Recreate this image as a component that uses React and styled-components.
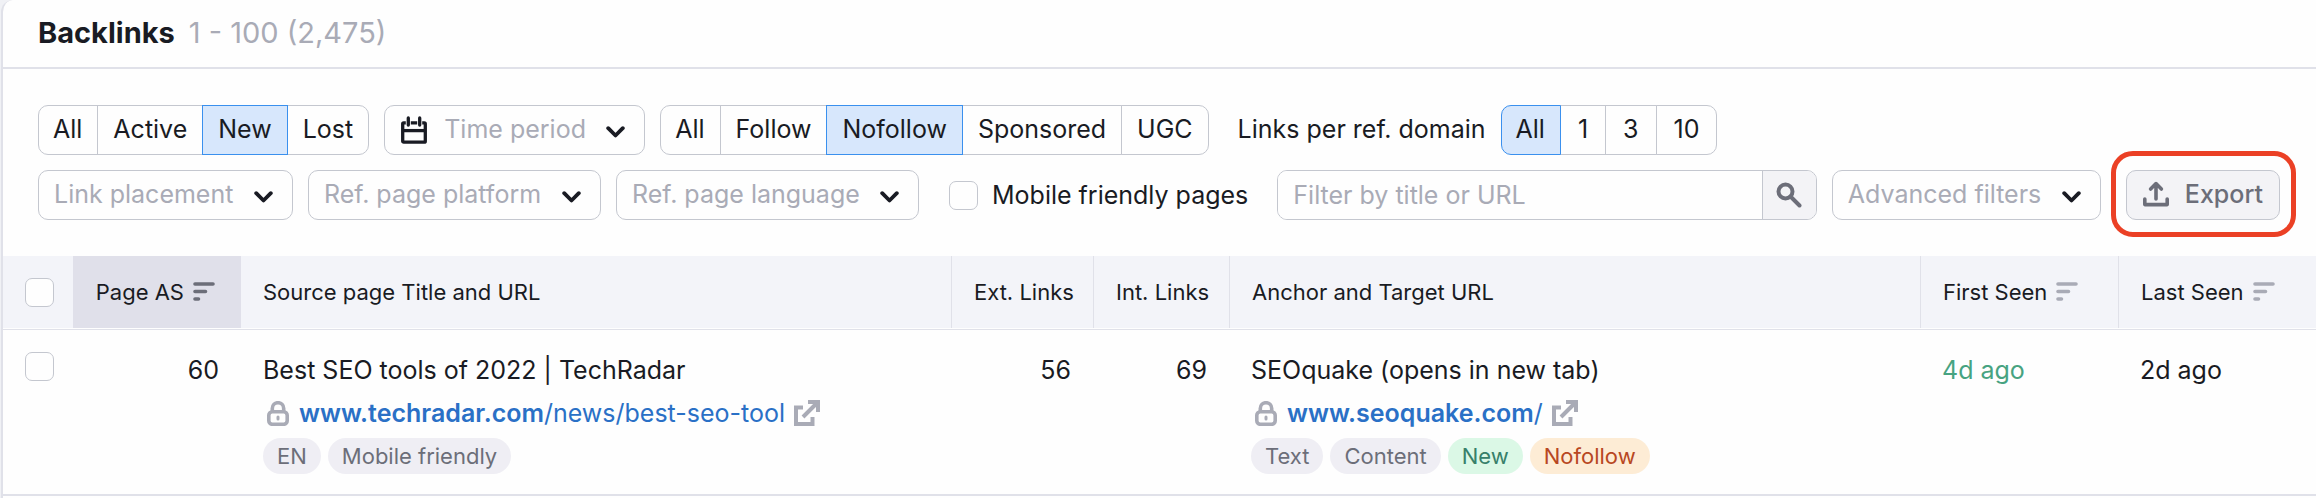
import React from 'react';
import styled, { createGlobalStyle } from 'styled-components';

const GlobalStyle = createGlobalStyle`
  *, *::before, *::after {
    box-sizing: border-box;
  }
  body {
    margin: 0;
    background: #f0f1f5;
    color: #191b23;
    font-family: Inter, "Liberation Sans", sans-serif;
    font-size: 25px;
    line-height: 36px;
  }
  button, input, select {
    font: inherit;
    color: inherit;
    margin: 0;
  }
`;

const Card = styled.main`
  border-left: 2px solid #e0e1e9;
  border-top-left-radius: 12px;
  margin-left: 1px;
  min-height: 100vh;
  background: #fefefe;
`;

const CardHeader = styled.header`
  display: flex;
  align-items: center;
  gap: 14px;
  height: 69px;
  padding: 0 35px 2px;
  border-bottom: 2px solid #e0e1e9;
`;

const Title = styled.h1`
  margin: 0;
  font-size: 29px;
  font-weight: 700;
`;

const Range = styled.span`
  font-size: 29px;
  color: #a9abb6;
`;

const Filters = styled.div`
  display: flex;
  flex-direction: column;
  gap: 15px;
  padding: 36px 36px 36px 35px;
`;

const FilterRow = styled.div`
  display: flex;
  align-items: center;
  gap: 15px;
`;

const SegmentGroup = styled.div`
  display: flex;
`;

const Segment = styled.button`
  position: relative;
  z-index: ${props => (props.$active ? 1 : 0)};
  height: 50px;
  padding: 0 ${props => (props.$numeric ? '17px' : '15px')} 2px;
  margin-left: -1px;
  border: 1px solid ${props => (props.$active ? '#3a90ee' : '#c4c7cf')};
  background: ${props => (props.$active ? '#d7e7fc' : '#fefefe')};

  &:first-child {
    margin-left: 0;
    padding: 0 15px 2px 14px;
    border-radius: 10px 0 0 10px;
  }
  &:last-child {
    border-radius: 0 10px 10px 0;
  }
`;

const GroupLabel = styled.span`
  margin-left: 14px;
  padding-bottom: 2px;
`;

const SelectBox = styled.div`
  display: grid;
  align-items: center;

  & > * {
    grid-area: 1 / 1;
  }
  & > svg {
    pointer-events: none;
    margin: 0 17px;
  }
  & > svg:last-child {
    justify-self: end;
    margin: 4px 20px 0;
  }
`;

const SelectField = styled.select`
  appearance: none;
  height: 50px;
  padding: 0 58px 2px ${props => (props.$withIcon ? '59px' : '15px')};
  border: 1px solid #c4c7cf;
  border-radius: 10px;
  background: #fefefe;
  color: #a9abb6;
`;

const CheckLabel = styled.label`
  display: flex;
  align-items: center;
  gap: 14px;
  margin: 0 14px 0 15px;
`;

const Checkbox = styled.input`
  appearance: none;
  display: block;
  width: 29px;
  height: 29px;
  border: 1px solid #c4c7cf;
  border-radius: 7px;
  background: #fefefe;
`;

const Search = styled.form`
  display: flex;
  flex: 1;
  height: 50px;
  border: 1px solid #c4c7cf;
  border-radius: 10px;
  overflow: hidden;
`;

const SearchInput = styled.input`
  flex: 1;
  min-width: 0;
  padding: 0 15px;
  border: 0;
  background: #fefefe;

  &::placeholder {
    color: #a9abb6;
    opacity: 1;
  }
`;

const SearchButton = styled.button`
  display: flex;
  align-items: center;
  justify-content: center;
  width: 54px;
  padding: 0;
  border: 0;
  border-left: 1px solid #c4c7cf;
  background: #f3f3f6;
`;

const Highlight = styled.div`
  position: relative;
  margin-left: 10px;

  &::after {
    content: "";
    position: absolute;
    inset: -19px -16px -17px -15px;
    border: 5px solid #eb4025;
    border-radius: 22px;
    pointer-events: none;
  }
`;

const ExportButton = styled.button`
  display: flex;
  align-items: center;
  gap: 16px;
  height: 50px;
  padding: 0 16px 2px;
  border: 1px solid #c4c7cf;
  border-radius: 10px;
  background: #f3f3f6;
  color: #6c6e79;
  font-weight: 500;
`;

const Table = styled.table`
  width: 100%;
  table-layout: fixed;
  border-collapse: separate;
  border-spacing: 0;
`;

const HeadCell = styled.th`
  height: 72px;
  padding: 0 ${props => (props.$sorted ? '26px' : '22px')} 0 22px;
  border-left: ${props => (props.$divider ? '1px solid #e0e1e9' : '0')};
  background: ${props => (props.$sorted ? '#e0e0ea' : '#f3f4f9')};
  font-size: 22px;
  font-weight: 400;
  text-align: ${props => (props.$right ? 'right' : 'left')};
  white-space: nowrap;
`;

const SortLabel = styled.span`
  display: inline-flex;
  align-items: center;
  gap: 9px;
`;

const Cell = styled.td`
  height: 167px;
  padding: 22px 22px 20px;
  border-top: 1px solid #e0e1e9;
  border-bottom: 2px solid #e0e1e9;
  color: ${props => props.$color || 'inherit'};
  text-align: ${props => (props.$right ? 'right' : 'left')};
  vertical-align: top;
`;

const Spacer = styled.td`
  height: 1px;
  padding: 0;
`;

const UrlLine = styled.div`
  display: flex;
  align-items: center;
  gap: 9px;
  height: 50px;
`;

const Url = styled.a`
  color: #2a70c6;
  text-decoration: none;

  b {
    font-weight: 600;
  }
`;

const Tags = styled.div`
  display: flex;
  gap: 7px;
`;

const tones = {
  gray: ['#efeef4', '#6c6e79'],
  green: ['#dbf8e6', '#37806a'],
  orange: ['#fdecd5', '#b84722'],
};

const Tag = styled.span`
  height: 36px;
  padding: 0 14px;
  border-radius: 18px;
  background: ${props => tones[props.$tone][0]};
  color: ${props => tones[props.$tone][1]};
  font-size: 22px;
`;

const Chevron = () => (
  <svg width="19" height="12" viewBox="0 0 19 12" fill="none" stroke="#191b23" strokeWidth="3.8" strokeLinecap="round" strokeLinejoin="round">
    <path d="M2.2 2.2 9.5 9.5l7.3-7.3" />
  </svg>
);

const CalendarIcon = () => (
  <svg width="26" height="28" viewBox="0 0 26 28" fill="none" stroke="#191b23" strokeWidth="3.3">
    <rect x="1.7" y="6.8" width="22.6" height="19.4" rx="1" />
    <path d="M2 14.6h22" />
    <path d="M7.3 3v6M18.7 3v6" stroke="#fefefe" strokeWidth="5" />
    <path d="M7.3 2v7M18.7 2v7" strokeLinecap="round" />
  </svg>
);

const SearchIcon = () => (
  <svg width="26" height="26" viewBox="0 0 26 26" fill="none" stroke="#6c6e79" strokeWidth="4">
    <circle cx="9.5" cy="9.5" r="7" />
    <path d="M14.5 14.5 23.5 23.5" strokeLinecap="round" />
  </svg>
);

const ExportIcon = () => (
  <svg width="26" height="26" viewBox="0 0 26 26" fill="none" stroke="#6c6e79" strokeWidth="3.6" strokeLinecap="round" strokeLinejoin="round">
    <path d="M1.8 18V23.6H24.2V18M13 18V3M7.6 8 13 2.6 18.4 8" />
  </svg>
);

const SortIcon = ({ color = '#a9abb6' }) => (
  <svg width="22" height="20" viewBox="0 0 22 20" stroke={color} strokeWidth="3.6" strokeLinecap="round">
    <path d="M2 2h18M2 9.5h10.5M2 17h3.5" />
  </svg>
);

const LockIcon = () => (
  <svg width="27" height="25" viewBox="-4 0 27 25" fill="none" stroke="#a9abb6" strokeWidth="3.6">
    <path d="M5.3 11V7.4a5.7 5.7 0 0 1 11.4 0V11" />
    <rect x="1.8" y="10.7" width="18.4" height="12.6" rx="3.5" />
    <path d="M11 16v2" strokeLinecap="round" strokeWidth="3" />
  </svg>
);

const ExternalIcon = () => (
  <svg width="26" height="26" viewBox="0 0 26 26" fill="none" stroke="#a9abb6" strokeWidth="4">
    <path d="M9 7.5H2V24h16.5v-7M9 17 23 3M14 2h10v10" />
  </svg>
);

const Dropdown = ({ label, icon }) => (
  <SelectBox>
    <SelectField aria-label={label} $withIcon={!!icon}>
      <option>{label}</option>
    </SelectField>
    {icon}
    <Chevron />
  </SelectBox>
);

const Segments = ({ label, items, active, numeric }) => (
  <SegmentGroup role="group" aria-label={label}>
    {items.map(item => (
      <Segment
        key={item}
        type="button"
        $active={item === active}
        $numeric={numeric}
        aria-pressed={item === active}
      >
        {item}
      </Segment>
    ))}
  </SegmentGroup>
);

const LinkCell = ({ title, host, path, tags }) => (
  <Cell>
    <div>{title}</div>
    <UrlLine>
      <LockIcon />
      <Url href="#"><b>{host}</b>{path}</Url>
      <ExternalIcon />
    </UrlLine>
    <Tags>
      {tags.map(([text, tone]) => <Tag key={text} $tone={tone}>{text}</Tag>)}
    </Tags>
  </Cell>
);

function App() {
  return (
    <>
      <GlobalStyle />
      <Card>
        <CardHeader>
          <Title>Backlinks</Title>
          <Range>1 - 100 (2,475)</Range>
        </CardHeader>
        <Filters>
          <FilterRow>
            <Segments label="Link status" items={['All', 'Active', 'New', 'Lost']} active="New" />
            <Dropdown label="Time period" icon={<CalendarIcon />} />
            <Segments label="Link type" items={['All', 'Follow', 'Nofollow', 'Sponsored', 'UGC']} active="Nofollow" />
            <GroupLabel>Links per ref. domain</GroupLabel>
            <Segments label="Links per ref. domain" items={['All', '1', '3', '10']} active="All" numeric />
          </FilterRow>
          <FilterRow>
            <Dropdown label="Link placement" />
            <Dropdown label="Ref. page platform" />
            <Dropdown label="Ref. page language" />
            <CheckLabel>
              <Checkbox type="checkbox" />
              Mobile friendly pages
            </CheckLabel>
            <Search onSubmit={e => e.preventDefault()}>
              <SearchInput type="text" placeholder="Filter by title or URL" aria-label="Filter by title or URL" />
              <SearchButton type="submit" aria-label="Search"><SearchIcon /></SearchButton>
            </Search>
            <Dropdown label="Advanced filters" />
            <Highlight>
              <ExportButton type="button"><ExportIcon />Export</ExportButton>
            </Highlight>
          </FilterRow>
        </Filters>
        <Table>
          <colgroup>
            <col width="70" />
            <col width="168" />
            <col width="710" />
            <col width="142" />
            <col width="136" />
            <col />
            <col width="198" />
            <col width="198" />
          </colgroup>
          <thead>
            <tr>
              <HeadCell><Checkbox type="checkbox" aria-label="Select all" /></HeadCell>
              <HeadCell $sorted $right>
                <SortLabel>Page AS <SortIcon color="#6c6e79" /></SortLabel>
              </HeadCell>
              <HeadCell>Source page Title and URL</HeadCell>
              <HeadCell $divider $right>Ext. Links</HeadCell>
              <HeadCell $divider $right>Int. Links</HeadCell>
              <HeadCell $divider>Anchor and Target URL</HeadCell>
              <HeadCell $divider><SortLabel>First Seen <SortIcon /></SortLabel></HeadCell>
              <HeadCell $divider><SortLabel>Last Seen <SortIcon /></SortLabel></HeadCell>
            </tr>
          </thead>
          <tbody>
            <tr><Spacer colSpan={8} /></tr>
            <tr>
              <Cell><Checkbox type="checkbox" aria-label="Select row" /></Cell>
              <Cell $right>60</Cell>
              <LinkCell
                title="Best SEO tools of 2022 | TechRadar"
                host="www.techradar.com"
                path="/news/best-seo-tool"
                tags={[['EN', 'gray'], ['Mobile friendly', 'gray']]}
              />
              <Cell $right>56</Cell>
              <Cell $right>69</Cell>
              <LinkCell
                title="SEOquake (opens in new tab)"
                host="www.seoquake.com"
                path="/"
                tags={[['Text', 'gray'], ['Content', 'gray'], ['New', 'green'], ['Nofollow', 'orange']]}
              />
              <Cell $color="#47a381">4d ago</Cell>
              <Cell>2d ago</Cell>
            </tr>
          </tbody>
        </Table>
      </Card>
    </>
  );
}

export default App;
